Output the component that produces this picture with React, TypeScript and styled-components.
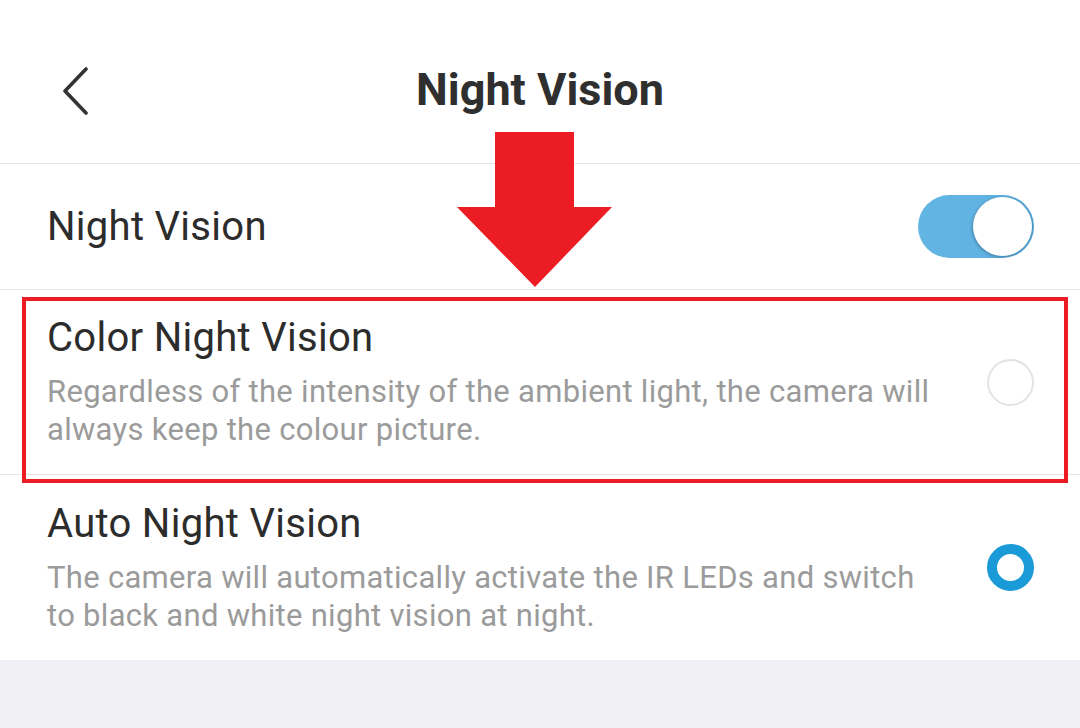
import React from "react";
import styled, { createGlobalStyle } from "styled-components";

const Global = createGlobalStyle`
  html, body { margin: 0; padding: 0; background: #f0f0f4; }
  body { font-family: Roboto, "Noto Sans", sans-serif; -webkit-font-smoothing: antialiased; }
  * { box-sizing: border-box; }
`;

const Page = styled.div`
  width: 1080px;
  height: 728px;
  background: #f0f0f4;
  position: relative;
  overflow: hidden;
`;

const Sheet = styled.div`
  background: #ffffff;
  display: flex;
  flex-direction: column;
`;

const Header = styled.header`
  height: 164px;
  display: grid;
  grid-template-columns: 164px 1fr 164px;
  align-items: center;
  padding-top: 16px;
  border-bottom: 1px solid #e6e6e6;
`;

const BackButton = styled.button`
  border: 0;
  background: none;
  padding: 0 0 0 61px;
  display: flex;
  align-items: center;
  height: 100%;
  cursor: pointer;
`;

const Title = styled.h1`
  margin: 0;
  text-align: center;
  font-size: 45px;
  font-weight: 700;
  color: #2f2f2f;
  line-height: 52px;
`;

const Row = styled.div<{ $h: number; $last?: boolean }>`
  height: ${(p) => p.$h}px;
  display: flex;
  align-items: center;
  padding: 0 46px 0 47px;
  border-bottom: ${(p) => (p.$last ? "none" : "1px solid #e6e6e6")};
`;

const RowText = styled.div`
  flex: 1;
  display: flex;
  flex-direction: column;
`;

const RowTitle = styled.div`
  font-size: 40px;
  font-weight: 400;
  letter-spacing: 0.3px;
  color: #2c2c2c;
  line-height: 46px;
`;

const RowDesc = styled.div`
  font-size: 31px;
  letter-spacing: 0.3px;
  color: #9b9b9b;
  line-height: 38px;
  margin-top: 12px;
  max-width: 890px;
`;

const Toggle = styled.div`
  width: 116px;
  height: 63px;
  border-radius: 32px;
  background: linear-gradient(90deg, #63b5e3 0%, #5fb2e2 60%, #4f9fd0 100%);
  position: relative;
  flex-shrink: 0;
`;

const Knob = styled.div`
  position: absolute;
  right: 2px;
  top: 2px;
  width: 59px;
  height: 59px;
  border-radius: 50%;
  background: #fff;
  box-shadow: -1px 1px 3px rgba(0, 0, 0, 0.25);
`;

const Radio = styled.div<{ $on?: boolean }>`
  width: 47px;
  height: 47px;
  border-radius: 50%;
  flex-shrink: 0;
  border: ${(p) => (p.$on ? "10px solid #1a9ad6" : "2px solid #e3e3e3")};
  background: #fff;
`;

const Highlight = styled.div`
  position: absolute;
  left: 22px;
  top: 297px;
  width: 1046px;
  height: 186px;
  border: 4px solid #ec1c24;
  pointer-events: none;
`;

const Arrow = styled.svg`
  position: absolute;
  left: 455px;
  top: 130px;
  pointer-events: none;
`;

export default function App() {
  return (
    <Page>
      <Global />
      <Sheet>
        <Header>
          <BackButton aria-label="Back">
            <svg width="30" height="50" viewBox="0 0 30 50">
              <polyline points="25,4 4,26 25,48" fill="none" stroke="#333" strokeWidth="3.6" strokeLinecap="round" strokeLinejoin="round" />
            </svg>
          </BackButton>
          <Title>Night Vision</Title>
          <div />
        </Header>
        <Row $h={126}>
          <RowText>
            <RowTitle>Night Vision</RowTitle>
          </RowText>
          <Toggle>
            <Knob />
          </Toggle>
        </Row>
        <Row $h={185}>
          <RowText>
            <RowTitle>Color Night Vision</RowTitle>
            <RowDesc>Regardless of the intensity of the ambient light, the camera will always keep the colour picture.</RowDesc>
          </RowText>
          <Radio />
        </Row>
        <Row $h={185} $last>
          <RowText>
            <RowTitle>Auto Night Vision</RowTitle>
            <RowDesc>The camera will automatically activate the IR LEDs and switch to black and white night vision at night.</RowDesc>
          </RowText>
          <Radio $on />
        </Row>
      </Sheet>
      <Highlight />
      <Arrow width="160" height="160" viewBox="0 0 160 160">
        <polygon points="40,2 119,2 119,77 157,77 80,157 2,77 40,77" fill="#ec1c24" />
      </Arrow>
    </Page>
  );
}
